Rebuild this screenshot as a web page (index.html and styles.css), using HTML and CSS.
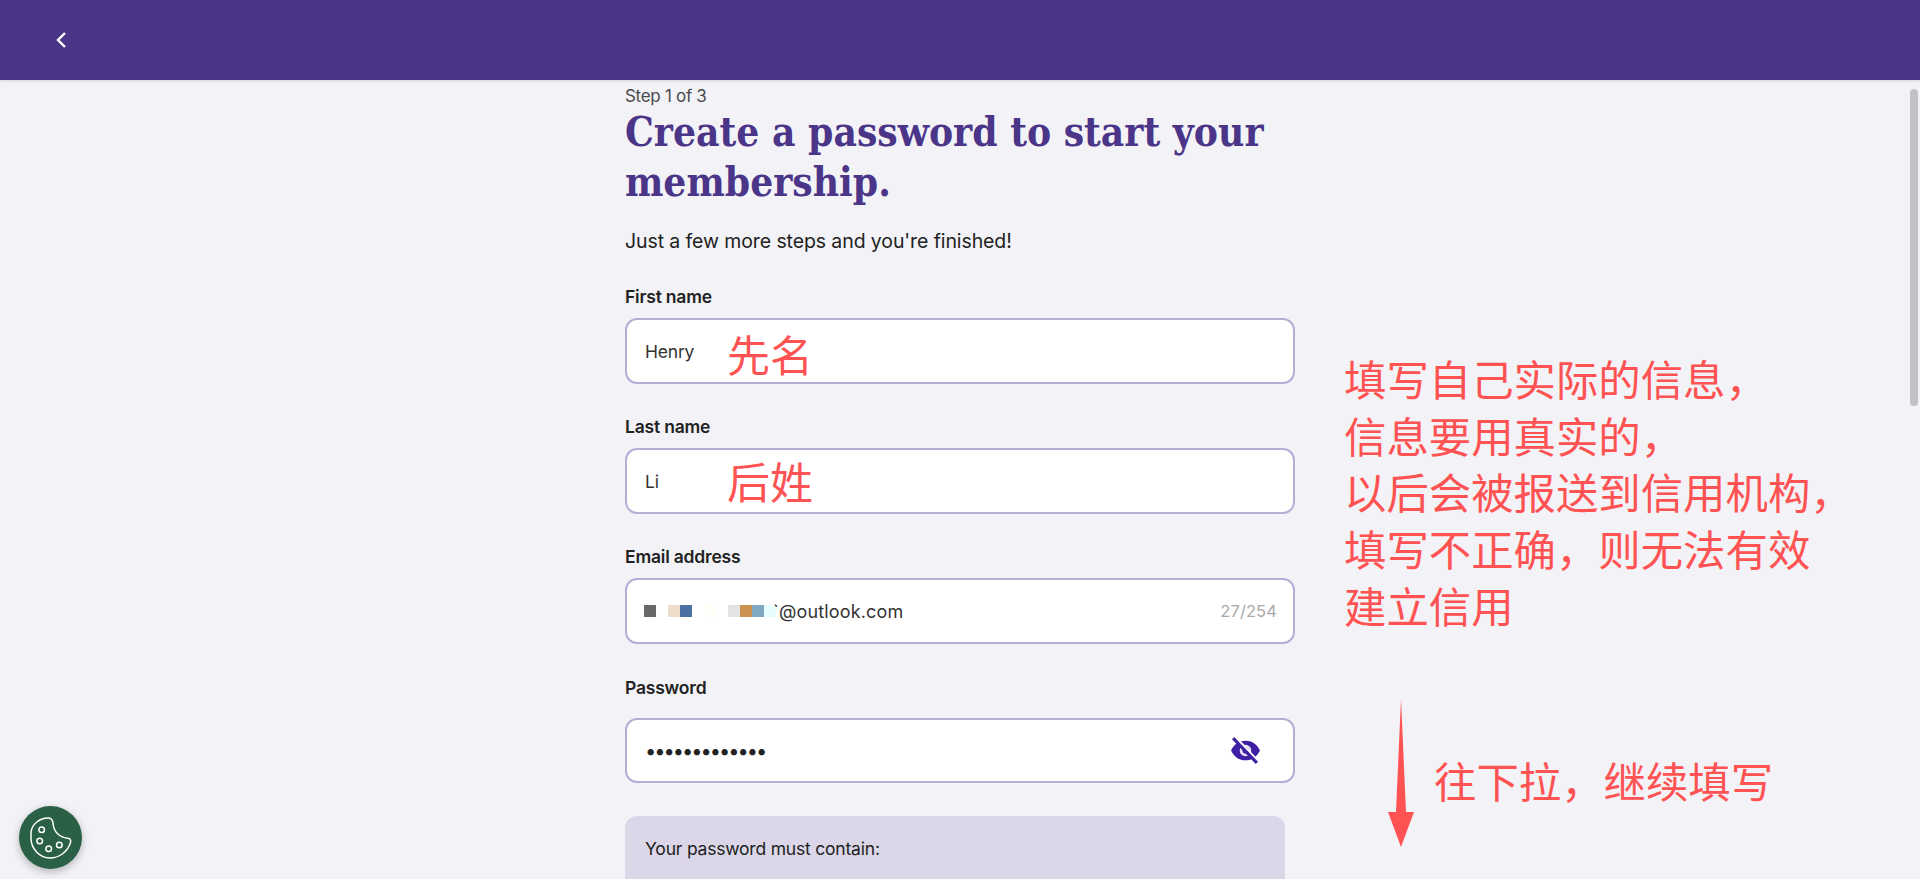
FILE: index.html
```html
<!DOCTYPE html>
<html lang="en">
<head>
<meta charset="utf-8">
<title>Create a password</title>
<link rel="stylesheet" href="styles.css">
</head>
<body>
<header class="topbar">
  <svg class="back" width="12" height="18" viewBox="0 0 12 18"><path d="M10 2 3 9l7 7" fill="none" stroke="#fff" stroke-width="2.4"/></svg>
</header>
<main class="form">
  <p class="step">Step 1 of 3</p>
  <h1 class="title">Create a password to start your membership.</h1>
  <p class="lead">Just a few more steps and you're finished!</p>
  <label class="label">First name</label>
  <div class="field">Henry</div>
  <label class="label">Last name</label>
  <div class="field">Li</div>
  <label class="label">Email address</label>
  <div class="field field-email">
    <span class="mosaic">
      <i class="px" style="background:#696969"></i><i class="px"></i><i class="px" style="background:#eedccb"></i><i class="px" style="background:#4a71a2"></i><i class="px"></i><i class="px" style="background:#fffef8"></i><i class="px"></i><i class="px" style="background:#e4e4e4"></i><i class="px" style="background:#cc9350"></i><i class="px" style="background:#7fa9c3"></i><i class="px" style="background:#e6fcfd"></i>
    </span>
    <span class="email-text">`@outlook.com</span>
    <span class="counter">27/254</span>
  </div>
  <label class="label label-pass">Password</label>
  <div class="field field-pass">
    <span class="dots">•••••••••••••</span>
    <svg class="eye" width="31" height="27" viewBox="0 0 30 26">
      <path d="M1 13C4 6.500 9 3.500 15 3.500S26 6.500 29 13c-3 6.500-8 9.500-14 9.500S4 19.500 1 13Z" fill="#3e1fa3"/>
      <circle cx="15" cy="13" r="5.600" fill="#e8e4f4"/>
      <circle cx="15" cy="13" r="3" fill="#3e1fa3"/>
      <path d="M4.500 0 27.500 24.500" stroke="#fff" stroke-width="3.500"/>
      <path d="M3 1 26 25" stroke="#3e1fa3" stroke-width="3"/>
    </svg>
  </div>
  <section class="rules">Your password must contain:</section>
</main>
<div class="note note-first">先名</div>
<div class="note note-last">后姓</div>
<div class="note note-main">填写自己实际的信息，<br>信息要用真实的，<br>以后会被报送到信用机构，<br>填写不正确，则无法有效<br>建立信用</div>
<div class="note note-scroll">往下拉，继续填写</div>
<svg class="arrow" width="28" height="150" viewBox="0 0 28 150"><path d="M14 1 19 114h8L14 149 1 114h8Z" fill="#ff5353"/></svg>
<button class="cookie" aria-label="Cookie settings">
  <svg width="63" height="63" viewBox="0 0 63 63" fill="none" stroke="#fff" stroke-width="1.500">
    <path d="M12 26C13 18 21 12 29 12c3 0 4.500 1.500 5 5 .5 7 4 14 16 15.500 2 .5 2 3.500 1 5.500-3 8-11 14-20 14-11 0-19-10-19-20 0-2 0-4 0-6Z"/>
    <circle cx="22.700" cy="23.700" r="2.800"/><circle cx="20.700" cy="35" r="2.800"/><circle cx="29.700" cy="42.700" r="2.800"/><circle cx="40.300" cy="39" r="2.800"/>
  </svg>
</button>
<div class="thumb"></div>
</body>
</html>
```
FILE: styles.css
```css
* { box-sizing: border-box; }
html, body { margin: 0; height: 879px; overflow: hidden; }
body { background: #f2f2f7; font-family: Inter, "Noto Sans", sans-serif; color: #222; position: relative; }
.topbar { height: 80px; background: #4b3589; display: flex; align-items: center; padding-left: 55px; box-shadow: 0 1px 3px rgba(0,0,0,.12); }
.back { display: block; }
.form { width: 670px; margin-left: 625px; }
.step { margin: 6px 0 0; font-size: 17px; line-height: 20px; letter-spacing: -.3px; color: #4a4a4f; }
.title { margin: 1px 0 0; font-family: "DejaVu Serif Condensed", "DejaVu Serif", serif; font-weight: 700; font-size: 40.3px; line-height: 50px; color: #4b3589; }
.lead { margin: 20px 0 0; font-size: 19.5px; line-height: 28px; letter-spacing: -.1px; color: #222; }
.label { display: block; font-size: 17.5px; line-height: 22px; font-weight: 600; letter-spacing: -.2px; color: #222; }
.lead + .label { margin-top: 31px; }
.field + .label { margin-top: 32px; }
.field { height: 66px; margin-top: 10px; border: 2px solid #b9acd6; border-radius: 12px; background: #fff; display: flex; align-items: center; padding: 0 16px 0 18px; font-size: 17.5px; letter-spacing: -.2px; color: #333; }
.field-email { font-size: 18px; padding-left: 17px; }
.mosaic { display: flex; }
.px { display: block; width: 12px; height: 12px; }
.email-text { margin-left: -3px; letter-spacing: .15px; }
.counter { margin-left: auto; color: #a9a9a9; font-size: 16.5px; letter-spacing: .1px; }
.field + .label-pass { margin-top: 33px; }
.field-pass { margin-top: 19px; height: 65px; }
.dots { font-size: 20px; letter-spacing: -2px; color: #222; }
.eye { margin-left: auto; margin-right: 16px; }
.rules { width: 660px; height: 100px; margin-top: 33px; padding: 23px 20px; background: #dbd7e8; border-radius: 12px; font-size: 17.5px; line-height: 20px; letter-spacing: -.2px; }
.note { position: absolute; font-family: "Noto Sans CJK SC", sans-serif; font-weight: 400; color: #ff5353; font-size: 42.4px; line-height: 56.7px; white-space: nowrap; }
.note-first { left: 727px; top: 325px; font-size: 43px; }
.note-last { left: 727px; top: 452px; font-size: 43px; }
.note-main { left: 1344px; top: 350px; }
.note-scroll { left: 1434px; top: 752px; }
.arrow { position: absolute; left: 1387px; top: 698px; }
.cookie { position: absolute; left: 19px; top: 806px; width: 63px; height: 63px; padding: 0; border: 0; border-radius: 50%; background: #2a6045; box-shadow: 0 3px 8px rgba(0,0,0,.25); }
.cookie svg { display: block; }
.thumb { position: absolute; left: 1910px; top: 89px; width: 8px; height: 317px; border-radius: 4px; background: #c2c2c4; }
```
